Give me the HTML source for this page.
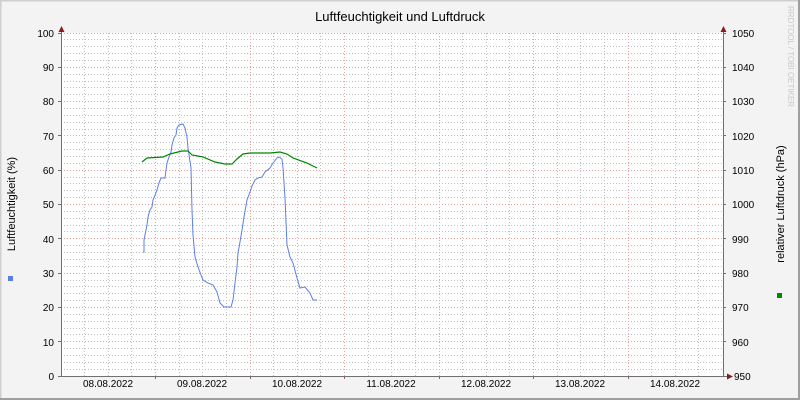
<!DOCTYPE html>
<html><head><meta charset="utf-8"><style>
html,body{margin:0;padding:0;}
body{width:800px;height:400px;overflow:hidden;}
svg{display:block;font-family:"Liberation Sans",sans-serif;}
</style></head><body>
<svg width="800" height="400" viewBox="0 0 800 400">
<rect width="800" height="400" fill="#f3f3f3"/>
<path d="M0 0.5H799M0.5 0V399" stroke="#cfcfcf" stroke-width="2"/>
<path d="M0 399H800M799 0V400" stroke="#9f9f9f" stroke-width="2"/>
<rect x="61" y="33" width="662" height="343" fill="#fff"/>
<path fill="none" stroke="#c0c0c0" stroke-width="1" stroke-dasharray="1,2" d="
M61 369.5H723M61 362.5H723M61 355.5H723M61 348.5H723
M61 334.5H723M61 328.5H723M61 321.5H723M61 314.5H723
M61 300.5H723M61 293.5H723M61 286.5H723M61 280.5H723
M61 266.5H723M61 259.5H723M61 252.5H723M61 245.5H723
M61 231.5H723M61 225.5H723M61 218.5H723M61 211.5H723
M61 197.5H723M61 190.5H723M61 183.5H723M61 177.5H723
M61 163.5H723M61 156.5H723M61 149.5H723M61 142.5H723
M61 129.5H723M61 122.5H723M61 115.5H723M61 108.5H723
M61 94.5H723M61 87.5H723M61 81.5H723M61 74.5H723
M61 60.5H723M61 53.5H723M61 46.5H723M61 39.5H723
M84.5 33V376M108.5 33V376M131.5 33V376
M179.5 33V376M202.5 33V376M226.5 33V376
M273.5 33V376M297.5 33V376M320.5 33V376
M368.5 33V376M391.5 33V376M415.5 33V376
M462.5 33V376M486.5 33V376M509.5 33V376
M557.5 33V376M580.5 33V376M604.5 33V376
M651.5 33V376M675.5 33V376M698.5 33V376"/>
<path fill="none" stroke="#e8a0a0" stroke-width="1" stroke-dasharray="1,2" d="
M61 341.5H723M61 307.5H723M61 273.5H723M61 238.5H723M61 204.5H723
M61 170.5H723M61 135.5H723M61 101.5H723M61 67.5H723M61 33.5H723
M155.5 33V376M250.5 33V376M344.5 33V376M439.5 33V376M533.5 33V376M628.5 33V376"/>
<path d="M61.5 376V30M723.5 376V30M58 376.5H727" stroke="#707070" stroke-width="1" fill="none"/>
<path d="M58 341.5h3M58 307.5h3M58 273.5h3M58 238.5h3M58 204.5h3M58 170.5h3M58 135.5h3M58 101.5h3M58 67.5h3M58 33.5h3
M723 341.5h3M723 307.5h3M723 273.5h3M723 238.5h3M723 204.5h3M723 170.5h3M723 135.5h3M723 101.5h3M723 67.5h3M723 33.5h3
M155.5 376v3M250.5 376v3M344.5 376v3M439.5 376v3M533.5 376v3M628.5 376v3" stroke="#707070" fill="none"/>
<path d="M58.5 32L61.5 26L64.5 32Z M720.5 32L723.5 26L726.5 32Z M727 373.5L733 376.5L727 379.5Z" fill="#8b1a1a"/>
<polyline fill="none" stroke="#5a7fe8" stroke-width="1" points="143,252 144,252 144,240 146,230 147,225 148,217 150,210 152,207 153,200 155,195 157,190 159,183 161,178 165,178 166,170 167,163 169,157 171,152 172,145 174,138 176,135 177,128 179,125 183,124 185,128 187,137 188,148 191,168 192,210 193,235 195,257 198,267 201,275 203,280 208,283 213,285 217,292 220,303 224,307 231,307 233,300 235,283 237,267 238,253 240,242 242,230 244,217 247,200 250,192 252,186 255,180 258,178 262,177 265,172 270,168 273,163 277,158 279,157 282,159 283,168 285,198 287,245 290,257 293,263 297,278 300,288 305,287 310,293 313,300 317,300"/>
<polyline fill="none" stroke="#008800" stroke-width="1.2" points="142,162 147,158 163,157 170,154 182,151 188,151 192,155 203,157 215,162 225,164 232,164 237,159 243,154 250,153 270,153 280,152 287,154 293,158 307,163 317,168"/>
<text x="400" y="21" font-size="13" text-anchor="middle" fill="#000">Luftfeuchtigkeit und Luftdruck</text>
<g font-size="10" fill="#000" text-anchor="end">
<text x="54" y="380">0</text><text x="54" y="346">10</text><text x="54" y="311">20</text><text x="54" y="277">30</text><text x="54" y="243">40</text><text x="54" y="208">50</text><text x="54" y="174">60</text><text x="54" y="140">70</text><text x="54" y="105">80</text><text x="54" y="71">90</text><text x="54" y="37">100</text>
</g>
<g font-size="10" fill="#000">
<text x="734" y="380">950</text><text x="732" y="346">960</text><text x="732" y="311">970</text><text x="732" y="277">980</text><text x="732" y="243">990</text><text x="732" y="208">1000</text><text x="732" y="174">1010</text><text x="732" y="140">1020</text><text x="732" y="105">1030</text><text x="732" y="71">1040</text><text x="732" y="37">1050</text>
</g>
<g font-size="10" fill="#000" text-anchor="middle">
<text x="108" y="387">08.08.2022</text><text x="202" y="387">09.08.2022</text><text x="297" y="387">10.08.2022</text><text x="391" y="387">11.08.2022</text><text x="486" y="387">12.08.2022</text><text x="580" y="387">13.08.2022</text><text x="675" y="387">14.08.2022</text>
</g>
<text transform="translate(15,204) rotate(-90)" font-size="11" text-anchor="middle" fill="#000">Luftfeuchtigkeit (%)</text>
<text transform="translate(784,204) rotate(-90)" font-size="11" text-anchor="middle" fill="#000">relativer Luftdruck (hPa)</text>
<text transform="translate(788,6) rotate(90)" font-size="8" fill="#c8c8c8">RRDTOOL / TOBI OETIKER</text>
<rect x="8" y="276" width="5" height="5" fill="#5a7fe8"/>
<rect x="777" y="293" width="5" height="5" fill="#008800"/>
</svg>
</body></html>
